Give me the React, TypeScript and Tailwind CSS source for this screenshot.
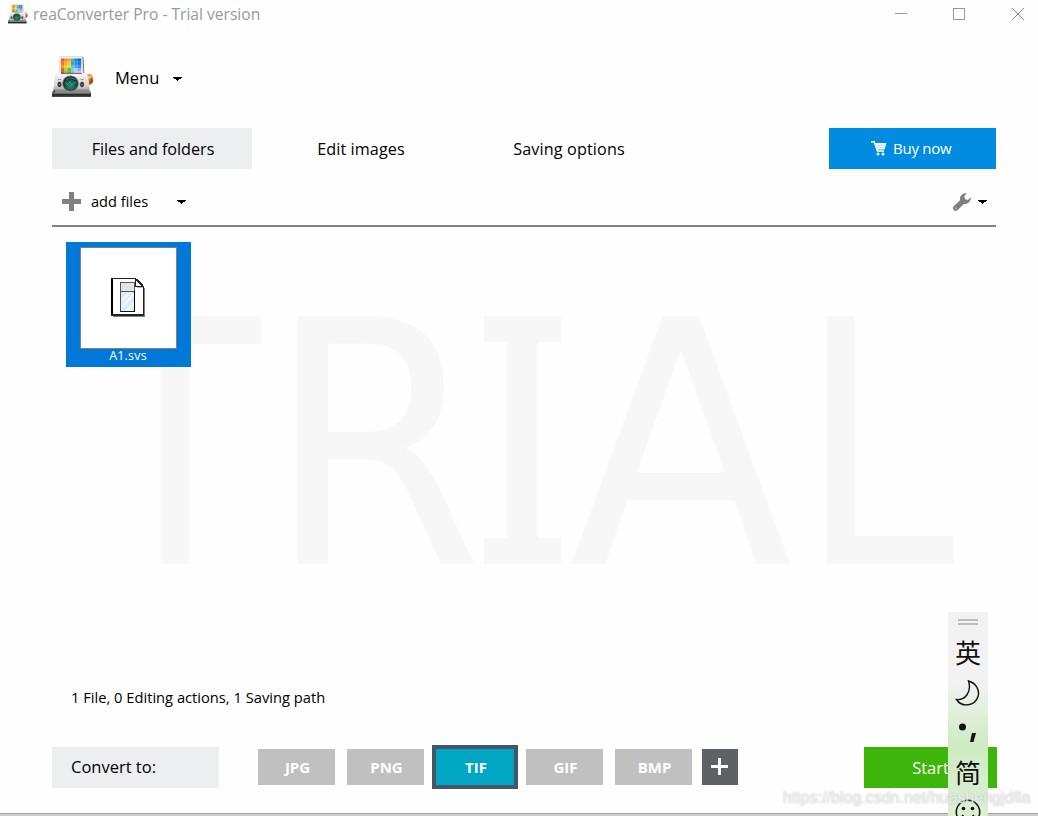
import React from "react";

function Caret() {
  return (
    <svg width="9" height="4" viewBox="0 0 9 4" shapeRendering="crispEdges" className="mt-px shrink-0">
      <path d="M0 0H9V1H8V2H6V3H5V4H4V3H3V2H1V1H0Z" fill="#000" />
    </svg>
  );
}

const PHOTO = [
  ["#ee5a1c", "#f28a22", "#f2a52b", "#5aa9a4", "#1f7fdc", "#1068c8"],
  ["#ee7a1e", "#f5a92c", "#f2d03c", "#35a5ae", "#159ae6", "#1b75dc"],
  ["#f4981f", "#f5d02c", "#dfe03a", "#55c9e0", "#35aeee", "#3a8bea"],
  ["#ec5a26", "#c3c72f", "#68b937", "#7cd8d8", "#b6c8ff", "#a59af0"],
  ["#d9382a", "#8dbb32", "#48ad44", "#6cc9a4", "#c8b7fe", "#dcb0f8"],
];

function CameraLogo({ size }: { size: number }) {
  return (
    <svg width={size} height={size} viewBox="0 0 42 42" className="shrink-0">
      <defs>
        <linearGradient id="body" x1="0" y1="0" x2="0" y2="1">
          <stop offset="0" stopColor="#f4f4f4" />
          <stop offset="0.65" stopColor="#d4d4d2" />
          <stop offset="1" stopColor="#9a9a9a" />
        </linearGradient>
        <radialGradient id="lens" cx="0.5" cy="0.65" r="0.6">
          <stop offset="0" stopColor="#2f8a72" />
          <stop offset="0.7" stopColor="#12594f" />
          <stop offset="1" stopColor="#08302e" />
        </radialGradient>
        <linearGradient id="base" x1="0" y1="0" x2="0" y2="1">
          <stop offset="0" stopColor="#777" />
          <stop offset="0.5" stopColor="#222" />
          <stop offset="1" stopColor="#555" />
        </linearGradient>
      </defs>
      <path d="M8 .5H30.5V21H7Z" fill="#eef0f2" stroke="#c8ccce" strokeWidth="0.6" />
      <path d="M31 1L32 20" stroke="#777" strokeWidth="1" />
      {PHOTO.map((row, y) =>
        row.map((c, x) => (
          <rect key={`${x}-${y}`} x={9 + x * 3.35} y={2.5 + y * 3.2} width="3.4" height="3.25" fill={c} />
        ))
      )}
      <path d="M33 19.5Q36 17 39 18.5Q42.3 22 41 26Q40 29 36 29.5H33Z" fill="#d8892b" />
      <path d="M35 20Q39 18.5 39.5 22L36 23Z" fill="#f4c36a" />
      <path d="M39 22Q42 24 40 27L37 28Z" fill="#87501a" />
      <path d="M5 17H32Q35 17 36 20L38 36H1L3 20Q3 17 5 17Z" fill="url(#body)" />
      <path d="M9 17.5H30" stroke="#777" strokeWidth="1.2" />
      <path d="M6 19.5H31" stroke="#fff" strokeWidth="1.2" />
      <path d="M0 36L3 33.5H36L39 36V38H0Z" fill="#8a8a8a" />
      <path d="M3 33.5L0 37H3Z" fill="#333" />
      <path d="M0 36.5H39V41H0Z" fill="url(#base)" />
      <path d="M1 37H38" stroke="#999" strokeWidth="0.7" />
      <ellipse cx="18.5" cy="27.5" rx="8" ry="7.7" fill="#29302f" stroke="#8a8a8a" strokeWidth="0.8" />
      <ellipse cx="18.5" cy="27.7" rx="6.5" ry="6.3" fill="url(#lens)" />
      <path d="M13 26L15.5 28.5L18 25.5L20 29L23 26L24.5 27" fill="none" stroke="#4cae93" strokeWidth="0.7" />
      <path d="M14 24Q19 20 24 24" fill="none" stroke="#487b73" strokeWidth="1" />
      <ellipse cx="7.5" cy="28.5" rx="2.3" ry="3" fill="#303030" stroke="#eee" strokeWidth="0.5" />
      <ellipse cx="30" cy="28.5" rx="2.3" ry="3" fill="#303030" stroke="#eee" strokeWidth="0.5" />
      <path d="M6.8 28.5H8.2M29.3 28.5H30.7" stroke="#999" />
      <path d="M6 23.5H9M28.5 23.5H31.5" stroke="#888" strokeWidth="0.8" />
    </svg>
  );
}

function CartIcon() {
  return (
    <svg width="16" height="15" viewBox="0 0 16 15" className="shrink-0">
      <path d="M0 .8H3.2L6.5 10H13" fill="none" stroke="#fff" strokeWidth="1.5" />
      <path d="M4 2H15.5L13.5 8.5H6Z" fill="#fff" />
      <path d="M4.5 4.2H14M5.5 6.4H13.5" stroke="#63b7ea" strokeWidth="0.5" />
      <circle cx="7" cy="13" r="1.5" fill="#fff" />
      <circle cx="12" cy="13" r="1.5" fill="#fff" />
    </svg>
  );
}

function WrenchIcon() {
  return (
    <svg width="18" height="18" viewBox="0 0 18 18" className="mt-px shrink-0">
      <path
        d="M13.8.3C10.2-.3 6.6 2.3 7 6.2L6.8 7.5L.6 13.3C-.5 14.8-.2 16.5 1 17.3C2.2 18.3 4 18 5 16.8L10.8 11C14.4 11.6 17.9 8.6 18 4.5L14.6 6.9L12 6L11.3 3.3Z"
        fill="#808080"
      />
      <circle cx="2.8" cy="15.2" r="0.9" fill="#b8b8b8" />
    </svg>
  );
}

function FileIcon() {
  return (
    <svg width="35" height="40" viewBox="0 0 35 40" shapeRendering="crispEdges" className="-ml-px">
      <path d="M2 38.5H33.5V10" fill="none" stroke="#808080" />
      <path d="M0 0H25L32 8V37H0Z" fill="#fff" />
      <path d="M0 0H2V38H0Z" fill="#000" />
      <path d="M0 0H25V1H0ZM0 36H33V38H0ZM32 8H33V38H32Z" fill="#222" />
      <path d="M24 1H25V8H32V9H24Z" fill="#222" />
      <path d="M26 9.5H32" stroke="#b8b8b8" />
      <path d="M25 1h2v1h1v1h1v1h1v1h1v1h1v2h-2v-1h-1v-1h-1v-1h-1v-1h-1v-1h-1z" fill="#222" />
      <path d="M9 4H24V34H9Z" fill="#555" />
      <path d="M10 5H23V13H10Z" fill="#e4e4e4" />
      <path d="M10 14H23V33H10Z" fill="#d8edf8" />
      <path d="M16 15H20L11 24V21ZM21 16H23V18L12 29H10V27ZM23 23V28L18 33H14Z" fill="#f2f4f5" />
      <path d="M23 13H24V34H23Z" fill="#000" />
      <path d="M9 33H24V34H9Z" fill="#111" />
    </svg>
  );
}

const MARK = [
  { ch: "T", x: 89.4, w: 170.3 },
  { ch: "R", x: 267, w: 216 },
  { ch: "I", x: 477.2, w: 90.3 },
  { ch: "A", x: 568.9, w: 223.8 },
  { ch: "L", x: 799.7, w: 155.3 },
];

function TrialMark() {
  return (
    <div className="pointer-events-none absolute top-[290px] left-0 h-[300px] w-full">
      <svg width="1038" height="300" viewBox="0 290 1038 300" overflow="visible" className="absolute inset-0">
        {MARK.map((m) => (
          <text
            key={m.ch}
            x={m.x}
            y="564"
            textLength={m.w}
            lengthAdjust="spacingAndGlyphs"
            fontSize="340"
            fill="#f7f7f7"
            className="font-['DejaVu_Sans',sans-serif]"
          >
            {m.ch}
          </text>
        ))}
      </svg>
      <div className="absolute top-[26px] left-[484px] h-[248px] w-[77px] border-y-[26px] border-[#f7f7f7]" />
    </div>
  );
}

function Format({ name }: { name: string }) {
  return (
    <button className="h-9 w-[77px] shrink-0 bg-[#c0c0c0] pl-0.5 text-[15px] font-bold text-white">{name}</button>
  );
}

function ImePanel() {
  return (
    <div className="absolute top-[612px] left-[948px] flex h-[204px] w-10 flex-col items-center overflow-hidden bg-linear-to-b from-[#f2f2f2] from-35% via-[#cdebc1] via-66% to-[#dcefd5] font-['Noto_Sans_CJK_SC',sans-serif] text-[26px] leading-[40px] text-[#111]">
      <svg width="20" height="6" viewBox="0 0 20 6" className="mt-[7px] shrink-0">
        <path d="M0 1H20M0 5H20" stroke="#aaa" strokeWidth="1.5" />
      </svg>
      <span className="mt-[7px] h-10 shrink-0">英</span>
      <svg width="26" height="26" viewBox="0 0 26 26" className="mt-[8px] shrink-0">
        <path d="M13.5 1C21 3 25 10 23 16.5C20 26 7 28 1.5 19.5C10 20.5 17 12 13.5 1Z" fill="none" stroke="#111" strokeWidth="1.4" />
      </svg>
      <svg width="26" height="22" viewBox="0 0 26 22" className="mt-[16px] shrink-0">
        <circle cx="7.5" cy="5" r="3.5" fill="#111" />
        <path d="M17 11H21L18.5 20H15Z" fill="#111" />
      </svg>
      <span className="mt-[8px] h-10 shrink-0">简</span>
      <svg width="26" height="26" viewBox="0 0 26 26" className="mt-[7px] shrink-0">
        <circle cx="13" cy="13" r="11.7" fill="none" stroke="#111" strokeWidth="1.5" />
        <circle cx="8.5" cy="9.5" r="1.8" fill="#111" />
        <circle cx="17.5" cy="9.5" r="1.8" fill="#111" />
        <path d="M7 16Q13 22 19 16" fill="none" stroke="#111" strokeWidth="1.5" />
      </svg>
    </div>
  );
}

export default function App() {
  return (
    <div className="relative flex h-[816px] w-[1038px] flex-col overflow-hidden bg-[#fefefe] font-['Open_Sans',sans-serif] text-black">
      <TrialMark />
      <header className="flex h-7 items-center pl-2 text-[#999]">
        <CameraLogo size={20} />
        <span className="ml-[5px] pt-0.5 text-[15.6px] whitespace-nowrap">reaConverter Pro - Trial version</span>
        <svg width="131" height="12" viewBox="0 0 131 12" className="mr-[13px] ml-auto">
          <path d="M1 5.5H13M59.5.5H70.5V11.5H59.5Z" fill="none" stroke="#999" shapeRendering="crispEdges" />
          <path d="M118 0L130 12M130 0L118 12" stroke="#888" />
        </svg>
      </header>

      <div className="mt-7 flex h-[42px] items-center pl-[52px]">
        <CameraLogo size={42} />
        <button className="ml-[21px] flex items-center pt-0.5 text-[16.5px]">
          <span className="w-[58px] text-left">Menu</span>
          <Caret />
        </button>
      </div>

      <nav className="mt-[30px] flex h-[41px] pl-[52px] text-[16.2px]">
        <button className="w-[200px] bg-[#eceef0] pt-0.5 pl-0.5 tracking-[-0.03px]">Files and folders</button>
        <button className="ml-[9px] w-[200px] pt-0.5 tracking-[0.1px]">Edit images</button>
        <button className="ml-2 w-[200px] pt-0.5 tracking-[0.13px]">Saving options</button>
        <button className="ml-[160px] flex w-[167px] items-center bg-[#008ce0] pl-[42px] text-[15px] tracking-[-0.25px] text-white">
          <CartIcon />
          <span className="ml-1.5">Buy now</span>
        </button>
      </nav>

      <div className="mx-[52px] mr-[42px] flex h-[58px] items-center border-b-2 border-[#808080] pt-2 pr-[9px] pl-[10px] text-[14.6px]">
        <svg width="19" height="19" viewBox="0 0 19 19" shapeRendering="crispEdges">
          <path d="M7 0H12V7H19V12H12V19H7V12H0V7H7Z" fill="#808080" />
        </svg>
        <span className="mr-7 ml-2.5 w-[58px] pt-px whitespace-nowrap">add files</span>
        <Caret />
        <span className="ml-auto flex items-center gap-[7px]">
          <WrenchIcon />
          <Caret />
        </span>
      </div>

      <main className="relative flex h-[435px] items-start pt-[15px] pl-[66px]">
        <div className="flex h-[125px] w-[125px] flex-col items-center bg-[#0078d7] pt-[5px]">
          <div className="flex h-[102px] w-[97px] items-center justify-center border border-[#808080] bg-white">
            <FileIcon />
          </div>
          <span className="-mt-px mr-px text-[12.5px] leading-[15px] tracking-[0.2px] text-white">A1.svs</span>
        </div>
      </main>

      <p className="mt-6 h-[22px] pl-[71px] text-[14.7px] leading-[22px] whitespace-nowrap">1 File, 0 Editing actions, 1 Saving path</p>

      <footer className="mt-[37px] flex h-[44px] items-center pl-[52px]">
        <div className="flex h-[41px] w-[167px] items-center bg-[#eceef0] pl-[19px] text-[16.5px]">Convert to:</div>
        <div className="ml-[39px] flex items-center">
          <Format name="JPG" />
          <span className="w-3" />
          <Format name="PNG" />
          <button className="mx-2 h-[44px] w-[86px] border-4 border-[#435768] bg-[#00a6c3] pl-0.5 text-[15px] font-bold text-white">TIF</button>
          <Format name="GIF" />
          <span className="w-3" />
          <Format name="BMP" />
          <button className="ml-[10px] flex h-9 w-9 items-center justify-center bg-[#5b6366] pr-px pb-px">
            <svg width="17" height="17" viewBox="0 0 17 17" shapeRendering="crispEdges">
              <path d="M7 0H10V7H17V10H10V17H7V10H0V7H7Z" fill="#fff" />
            </svg>
          </button>
        </div>
        <button className="ml-[126px] h-[41px] w-[133px] bg-[#3eb50a] pt-0.5 text-[16.5px] text-white">Start</button>
      </footer>

      <div className="mt-auto h-[3px] border-t border-[#a8a8a8] bg-[#cccccc]" />
      <ImePanel />
      <span className="absolute top-[788px] left-[783px] font-['Liberation_Sans',sans-serif] text-[16px] leading-5 whitespace-nowrap text-white/60 [text-shadow:0_0_2px_#bbb]">
        https://blog.csdn.net/huashengjdfla
      </span>
    </div>
  );
}
